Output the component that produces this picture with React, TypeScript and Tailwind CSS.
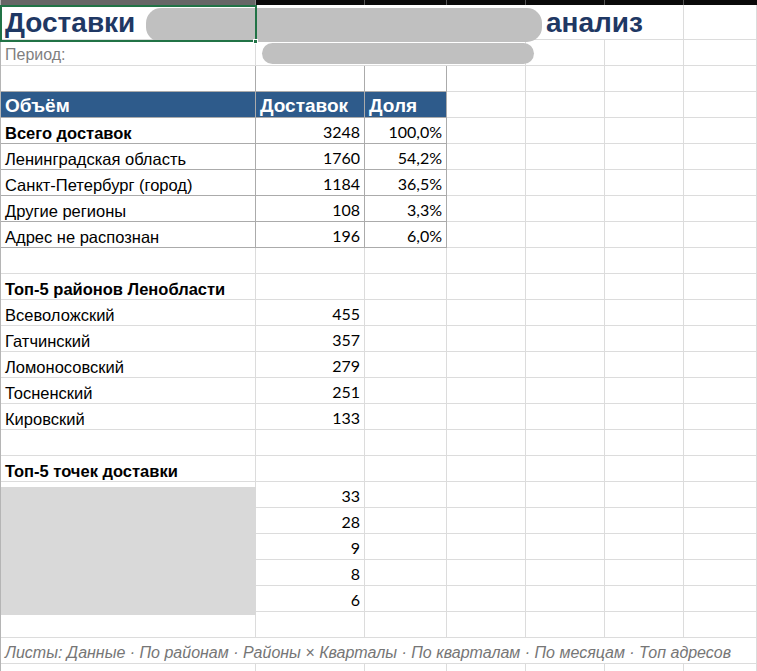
import type { ReactNode } from "react"

const cols = "grid grid-cols-[255px_109px_82px_79px_79px_79px_1fr]"

const body = "pl-[4px] pr-[2px] pb-[2px] text-[16.5px] leading-[16px] text-black"
const numeric = "justify-end pr-[4px] pb-[3px] font-['Lato',sans-serif] text-[16px] leading-[16px] text-black"
const head = "bg-[#2e5b8b] pl-[4px] pb-[2.5px] text-[19px] leading-[18px] font-bold text-white"

interface CellProps {
  className?: string
  dark?: boolean
  look?: string
  children?: ReactNode
}

function Cell({ className = "", dark = false, look = body, children }: CellProps) {
  return (
    <div
      className={`flex items-end overflow-hidden whitespace-nowrap border-r border-b ${
        dark ? "border-[#ababab]" : "border-[#dcdcdc]"
      } ${look} ${className}`}
    >
      {children}
    </div>
  )
}

function Blank({ count }: { count: number }) {
  return (
    <>
      {Array.from({ length: count }).map((_, i) => (
        <Cell key={i} />
      ))}
    </>
  )
}

const summary = [
  { label: "Всего доставок", count: 3248, share: "100,0%", bold: true },
  { label: "Ленинградская область", count: 1760, share: "54,2%" },
  { label: "Санкт-Петербург (город)", count: 1184, share: "36,5%" },
  { label: "Другие регионы", count: 108, share: "3,3%" },
  { label: "Адрес не распознан", count: 196, share: "6,0%" },
]

const districts = [
  { name: "Всеволожский", count: 455 },
  { name: "Гатчинский", count: 357 },
  { name: "Ломоносовский", count: 279 },
  { name: "Тосненский", count: 251 },
  { name: "Кировский", count: 133 },
]

const points = [33, 28, 9, 8, 6]

function EmptyRow() {
  return (
    <div className={`${cols} h-[26px]`}>
      <Blank count={7} />
    </div>
  )
}

export default function App() {
  return (
    <div className="h-[671px] w-[757px] overflow-hidden bg-white font-['Liberation_Sans',Arial,sans-serif]">
      <div className="relative border-l border-[#b5b5b5]">
        {/* column header strip, cut off at the top */}
        <div className={`${cols} h-[5px]`}>
          <div className="border-r border-[#8a8a8a] bg-[#666666]" />
          <div className="border-r border-[#555555] bg-[#0a0a0a]" />
          <div className="border-r border-[#555555] bg-[#0a0a0a]" />
          <div className="border-r border-[#555555] bg-[#0a0a0a]" />
          <div className="border-r border-[#555555] bg-[#0a0a0a]" />
          <div className="border-r border-[#555555] bg-[#0a0a0a]" />
          <div className="bg-[#0a0a0a]" />
        </div>

        {/* title */}
        <div className={`${cols} h-[35px]`}>
          <Cell
            className="col-span-6"
            look="pl-[4px] pb-[2px] text-[28px] leading-[28px] font-bold text-[#1f3864]"
          >
            <span className="w-[541px] shrink-0">Доставки</span>
            <span>анализ</span>
          </Cell>
          <Cell />
        </div>

        {/* period */}
        <div className={`${cols} h-[26px]`}>
          <Cell look="pl-[4px] pb-[2px] text-[16px] leading-[16px] text-[#7f7f7f]">Период:</Cell>
          <Cell className="col-span-3" />
          <Blank count={3} />
        </div>

        <div className={`${cols} h-[26px]`}>
          <Cell dark />
          <Cell dark />
          <Cell dark />
          <Blank count={4} />
        </div>

        {/* table header */}
        <div className={`${cols} h-[26px]`}>
          <Cell dark look={head}>Объём</Cell>
          <Cell dark look={head}>Доставок</Cell>
          <Cell dark look={head}>Доля</Cell>
          <Blank count={4} />
        </div>

        {summary.map((row) => (
          <div key={row.label} className={`${cols} h-[26px]`}>
            <Cell dark className={row.bold ? "font-bold" : ""}>{row.label}</Cell>
            <Cell dark look={numeric}>{row.count}</Cell>
            <Cell dark look={numeric}>{row.share}</Cell>
            <Blank count={4} />
          </div>
        ))}

        <EmptyRow />

        <div className={`${cols} h-[26px]`}>
          <Cell className="font-bold">Топ-5 районов Ленобласти</Cell>
          <Blank count={6} />
        </div>

        {districts.map((d) => (
          <div key={d.name} className={`${cols} h-[26px]`}>
            <Cell>{d.name}</Cell>
            <Cell look={numeric}>{d.count}</Cell>
            <Blank count={5} />
          </div>
        ))}

        <EmptyRow />

        <div className={`${cols} h-[26px]`}>
          <Cell className="font-bold">Топ-5 точек доставки</Cell>
          <Blank count={6} />
        </div>

        {points.map((p, i) => (
          <div key={i} className={`${cols} h-[26px]`}>
            <Cell />
            <Cell look={numeric}>{p}</Cell>
            <Blank count={5} />
          </div>
        ))}

        <EmptyRow />

        <div className={`${cols} h-[26px]`}>
          <Cell
            className="col-span-7"
            look="pl-[4px] pb-[2px] text-[16px] leading-[16px] italic text-[#767676]"
          >
            Листы: Данные · По районам · Районы × Кварталы · По кварталам · По месяцам · Топ адресов
          </Cell>
        </div>

        <EmptyRow />

        {/* redacted parts */}
        <div className="absolute left-[145px] top-[8px] h-[34px] w-[396px] rounded-[15px] bg-[#c0c0c0]" />
        <div className="absolute left-[261px] top-[43px] h-[21px] w-[272px] rounded-full bg-[#c0c0c0]" />
        <div className="absolute left-0 top-[487px] h-[128px] w-[255px] bg-[#d9d9d9]" />

        {/* active cell */}
        <div className="absolute left-[-1px] top-[5px] h-[37px] w-[257px] border-2 border-[#217346]" />
        <div className="absolute left-[252px] top-[39px] h-[5px] w-[5px] border border-white bg-[#217346]" />
      </div>
    </div>
  )
}
